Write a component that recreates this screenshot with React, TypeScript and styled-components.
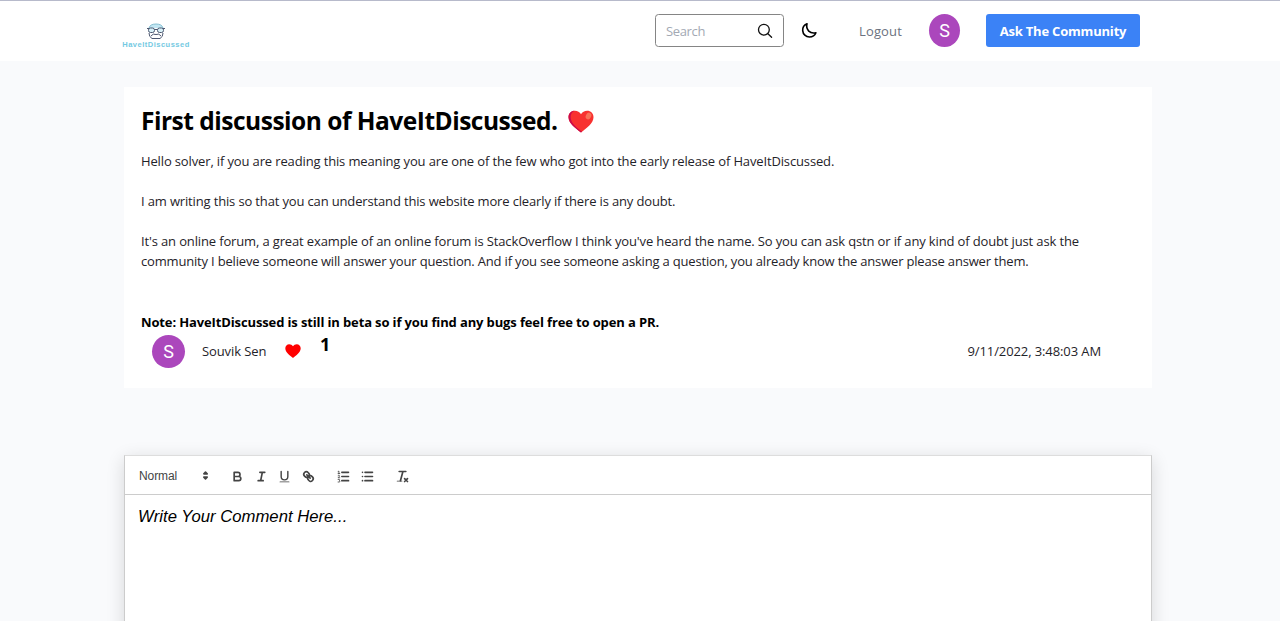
import React from 'react';
import styled, { createGlobalStyle } from 'styled-components';

const GlobalStyle = createGlobalStyle`
  *, *::before, *::after { box-sizing: border-box; }
  html, body { margin: 0; height: 100%; overflow: hidden; }
  body { background: #f9fafc; color: #000; font-family: "Open Sans", "Noto Sans", sans-serif; font-size: 13px; line-height: 20px; }
  svg { display: block; flex: none; }
  p, h1 { margin: 0; white-space: nowrap; }
`;

const Page = styled.div`
  height: 621px;
  overflow: hidden;
  display: flex;
  flex-direction: column;
`;
const Header = styled.header`
  height: 61px;
  flex: none;
  background: #fff;
  border-top: 1px solid #b7bacb;
  display: flex;
  align-items: center;
  padding: 0 140px 1px 121px;
`;
const Brand = styled.div`
  width: 70px;
  margin: 10px auto 0 0;
  display: flex;
  flex-direction: column;
  align-items: center;
`;
const BrandName = styled.span`
  font: 700 7.5px/9px "Liberation Sans", sans-serif;
  color: #74c9e2;
  letter-spacing: 0.5px;
  white-space: nowrap;
`;
const SearchBox = styled.label`
  width: 129px;
  height: 33px;
  border: 1px solid #858585;
  border-radius: 3.5px;
  display: flex;
  align-items: center;
  justify-content: space-between;
  padding: 0 10px;
  margin: 0 17px 0 0;
`;
const SearchInput = styled.input`
  width: 80px;
  border: 0;
  padding: 1px 0 0;
  outline: 0;
  background: transparent;
  font: 13px/20px "Open Sans", sans-serif;
  letter-spacing: -0.35px;
  &::placeholder { color: #a3a9b4; opacity: 1; }
`;
const Logout = styled.a`
  width: 44px;
  padding-top: 1px;
  margin: 0 26px 0 42px;
  color: #6b7280;
  letter-spacing: 0.15px;
  white-space: nowrap;
`;
const Avatar = styled.div<{ $w: number }>`
  width: ${p => p.$w}px;
  height: 33px;
  border-radius: 50%;
  background: #ab47bc;
  color: #fff;
  font: 18px/33px Roboto, sans-serif;
  text-align: center;
  flex: none;
`;
const AskButton = styled.button`
  width: 154px;
  height: 33px;
  margin-left: 26px;
  padding: 0;
  border: 0;
  border-radius: 3px;
  background: #3b82f6;
  color: #fff;
  font: 700 13px/34px "Open Sans", sans-serif;
  letter-spacing: -0.2px;
  white-space: nowrap;
`;

const Main = styled.main`
  width: 1028px;
  margin: 26px 0 0 124px;
`;
const Card = styled.article`
  height: 301px;
  background: #fff;
  padding: 17px 17px 0;
`;
const Title = styled.h1`
  display: flex;
  align-items: center;
  gap: 11px;
  font-size: 24.5px;
  line-height: 33px;
  font-weight: 700;
  height: 33px;
  margin-bottom: 14px;

  svg { margin-top: 2px; }
`;
const TitleText = styled.span`
  letter-spacing: -0.49px;
`;
const Line = styled.p<{ $gap?: number; $ls?: number; $bold?: boolean }>`
  height: 20px;
  margin-bottom: ${p => p.$gap ?? 0}px;
  letter-spacing: ${p => p.$ls ?? 0}px;
  color: ${p => (p.$bold ? '#000' : '#1f2329')};
  font-weight: ${p => (p.$bold ? 700 : 400)};
`;
const Meta = styled.footer`
  display: flex;
  align-items: center;
  height: 34px;
  margin-top: 2px;
  padding: 0 34px 0 11px;
  color: #1f2329;
`;
const Author = styled.span`
  width: 65px;
  margin: 0 18px 0 17px;
  letter-spacing: -0.1px;
  white-space: nowrap;
`;
const Likes = styled.strong`
  margin: 0 auto 14px 19px;
  color: #000;
  font-size: 18px;
`;
const Posted = styled.time`
  white-space: nowrap;
  letter-spacing: -0.1px;
`;

const Editor = styled.section`
  height: 300px;
  margin-top: 67px;
  background: #fff;
  border: 1px solid #ccc;
  border-top-color: #ddd;
  box-shadow: 0 4px 17px rgba(0, 0, 0, 0.14);
  font-family: "Liberation Sans", Arial, sans-serif;
`;
const Toolbar = styled.div`
  height: 39px;
  display: flex;
  align-items: center;
  padding: 1px 0 0 14px;
  border-bottom: 1px solid #ccc;
  color: #444;
`;
const Format = styled.div`
  width: 74px;
  display: flex;
  align-items: center;
  justify-content: space-between;
  font-size: 12px;
  line-height: 20px;
  letter-spacing: -0.1px;
  margin-right: 17px;
`;
const Group = styled.div`
  display: flex;
  gap: 8.6px;
  margin: 1px 20.5px 0 0;
`;
const Prompt = styled.div`
  padding: 12px 13px;
  font-size: 16.7px;
  line-height: 20px;
  font-style: italic;
`;

const QIcon = ({ children }: { children: React.ReactNode }) => (
  <svg width="15" height="15" viewBox="0 0 18 18" fill="none" stroke="#444" strokeWidth="2" strokeLinecap="round" strokeLinejoin="round">
    {children}
  </svg>
);

const Logo = () => (
  <svg width="20" height="17" viewBox="0 0 20 17" fill="none" stroke="#4c5770" strokeWidth="1">
    <path d="M3 5Q4 1 10 1t7 4" fill="#c3e7f3" stroke="#86bfd2" />
    <rect x="2.5" y="5" width="6" height="4.5" rx="2" fill="#d9f1f8" />
    <rect x="11.5" y="5" width="6" height="4.5" rx="2" fill="#d9f1f8" />
    <path d="M8.5 6.5h3M1 5.5h2M17 5.5h2M3 10q0 4 3 5.500h8q3-1.500 3-5.500" />
    <path d="M5 13q2-3 5-1.500 3-1.500 5 1.500" />
  </svg>
);

export default function App() {
  return (
    <Page>
      <GlobalStyle />
      <Header>
        <Brand>
          <Logo />
          <BrandName>HaveItDiscussed</BrandName>
        </Brand>
        <SearchBox>
          <SearchInput placeholder="Search" />
          <svg width="16" height="16" viewBox="0 0 16 16" fill="none" stroke="#111" strokeWidth="1.3" strokeLinecap="round">
            <circle cx="6.900" cy="6.700" r="5.400" />
            <path d="M10.900 10.700l3.700 3.600" />
          </svg>
        </SearchBox>
        <svg width="16" height="17" viewBox="0 0 16 17" fill="none" stroke="#000" strokeWidth="1.600" strokeLinejoin="round">
          <path d="M6 1.800C3 3 1.500 5.600 1.700 8.600c.3 3.700 3.200 6.400 6.700 6.400 3 0 5.500-1.600 6.500-4.300-2.800.7-5.300.2-7.100-1.600C6 7.200 5.300 4.500 6 1.800z" />
        </svg>
        <Logout>Logout</Logout>
        <Avatar $w={31}>S</Avatar>
        <AskButton>Ask The Community</AskButton>
      </Header>
      <Main>
        <Card>
          <Title>
            <TitleText>First discussion of HaveItDiscussed.</TitleText>
            <svg width="26" height="23" viewBox="0 0 26 23">
              <path d="M13 22.500C8 18.500.5 13.500.5 7.300.5 3.400 3.300.8 6.800.8c2.700 0 5 1.400 6.200 3.500C14.200 2.200 16.500.8 19.200.8c3.500 0 6.300 2.600 6.300 6.500C25.500 13.500 18 18.500 13 22.500z" fill="#f8312f" />
              <path d="M13 22.500C8 18.500.5 13.500.5 7.300.5 3.600 3 1 6.200.8 3.500 2.500 2.300 5 2.700 8 3.300 13.500 9 18 14 21.600z" fill="#ca0b4a" />
              <ellipse cx="20.500" cy="6" rx="2.600" ry="3.500" transform="rotate(28 20.500 6)" fill="#f87258" />
            </svg>
          </Title>
          <Line $gap={20} $ls={-0.138}>Hello solver, if you are reading this meaning you are one of the few who got into the early release of HaveItDiscussed.</Line>
          <Line $gap={20} $ls={-0.15}>I am writing this so that you can understand this website more clearly if there is any doubt.</Line>
          <Line $ls={-0.14}>It's an online forum, a great example of an online forum is StackOverflow I think you've heard the name. So you can ask qstn or if any kind of doubt just ask the</Line>
          <Line $gap={41} $ls={-0.18}>community I believe someone will answer your question. And if you see someone asking a question, you already know the answer please answer them.</Line>
          <Line $bold $ls={-0.13}>Note: HaveItDiscussed is still in beta so if you find any bugs feel free to open a PR.</Line>
          <Meta>
            <Avatar $w={33}>S</Avatar>
            <Author>Souvik Sen</Author>
            <svg width="16" height="14" viewBox="0 0 16 14">
              <path d="M8 14C5 11.500.3 8.500.3 4.300.3 1.900 2 .2 4.200.2 5.800.2 7.200 1 8 2.300 8.800 1 10.200.2 11.800.2 14 .2 15.700 1.900 15.700 4.300 15.700 8.500 11 11.500 8 14z" fill="#f00" />
            </svg>
            <Likes>1</Likes>
            <Posted>9/11/2022, 3:48:03 AM</Posted>
          </Meta>
        </Card>
        <Editor>
          <Toolbar>
            <Format>
              <span>Normal</span>
              <svg width="15" height="15" viewBox="0 0 18 18" fill="#444" stroke="#444" strokeWidth="2" strokeLinejoin="round">
                <polygon points="7 11 9 13 11 11 7 11" />
                <polygon points="7 7 9 5 11 7 7 7" />
              </svg>
            </Format>
            <Group>
              <QIcon>
                <path d="M5 4h4.500a2.500 2.500 0 0 1 0 5H5zM5 9h5.500a2.500 2.500 0 0 1 0 5H5z" />
              </QIcon>
              <QIcon>
                <path d="M7 4h6M5 14h6M8 14l2-10" />
              </QIcon>
              <QIcon>
                <path d="M5 3v6a4 4 0 0 0 8 0V3" strokeWidth="1.700" />
                <rect x="3" y="15" width="12" height="1" rx=".5" fill="#444" stroke="none" />
              </QIcon>
              <QIcon>
                <path d="M7 7l4 4" />
                <path d="M8.900 4.577a3.476 3.476 0 0 1 .36 4.679A3.476 3.476 0 0 1 4.577 8.900C3.185 7.500 2.035 6.400 4.217 4.217S7.500 3.185 8.900 4.577z" />
                <path d="M13.423 9.100a3.476 3.476 0 0 0-4.679-.36 3.476 3.476 0 0 0 .36 4.679c1.392 1.392 2.500 2.542 4.679.36s1.032-3.283-.36-4.679z" />
              </QIcon>
            </Group>
            <Group>
              <QIcon>
                <path d="M7 4h8M7 9h8M7 14h8" />
                <path strokeWidth="1" d="M2.500 5.500h2M3.500 5.500v-3l-1 .5M2.500 7.800c.7-.6 2-.3 1.700.7L2.500 10.500h2M2.500 12.500h1.300c1 0 1 1.400 0 1.500 1.200.1 1.200 1.600 0 1.600H2.500" />
              </QIcon>
              <QIcon>
                <path d="M6 4h9M6 9h9M6 14h9M3 4h0M3 9h0M3 14h0" />
              </QIcon>
            </Group>
            <Group>
              <QIcon>
                <path d="M5 3h8M6.500 14l3-11M11.500 11.500l3.500 3.500M15 11.500l-3.500 3.500" />
                <rect x="2" y="14" width="7" height="1" rx=".5" fill="#444" stroke="none" />
              </QIcon>
            </Group>
          </Toolbar>
          <Prompt>Write Your Comment Here...</Prompt>
        </Editor>
      </Main>
    </Page>
  );
}
